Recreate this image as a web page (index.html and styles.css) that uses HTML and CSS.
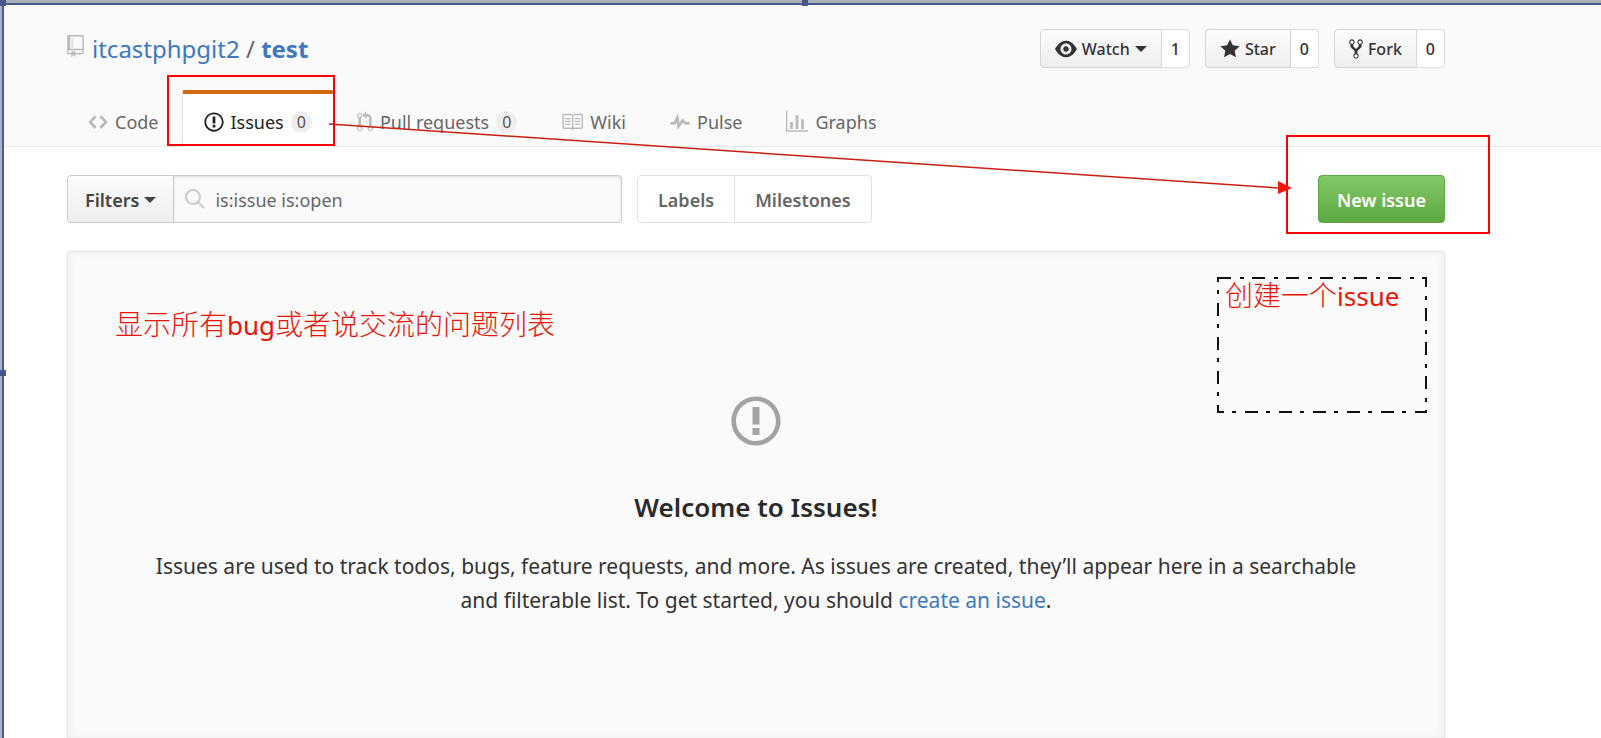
FILE: index.html
```html
<!DOCTYPE html>
<html lang="en">
<head>
<meta charset="utf-8">
<title>Issues · itcastphpgit2/test</title>
<link rel="stylesheet" href="styles.css">
</head>
<body>
<svg class="sprite" aria-hidden="true">
  <symbol id="issue" viewBox="0 0 14 16"><path d="M7 2.3c3.14 0 5.7 2.56 5.7 5.7s-2.56 5.7-5.7 5.7A5.71 5.71 0 0 1 1.3 8c0-3.14 2.56-5.7 5.7-5.7zM7 1C3.14 1 0 4.14 0 8s3.14 7 7 7 7-3.14 7-7-3.14-7-7-7zm1 3H6v5h2V4zm0 6H6v2h2v-2z"/></symbol>
</svg>
<header class="pagehead">
  <div class="container repo-row">
    <h1 class="repo-title">
      <svg class="repo-icon" viewBox="0 0 12 16" aria-hidden="true"><path d="M4 9H3V8h1v1zm0-3H3v1h1V6zm0-2H3v1h1V4zm0-2H3v1h1V2zm8-1v12c0 .55-.45 1-1 1H6v2l-1.500-1.500L3 16v-2H1c-.55 0-1-.45-1-1V1c0-.55.45-1 1-1h10c.55 0 1 .45 1 1zm-1 10H1v2h2v-1h3v1h5v-2zm0-10H2v9h9V1z"/></svg>
      <span><a href="#">itcastphpgit2</a> / <a class="repo-name" href="#">test</a></span>
    </h1>
    <div class="actions">
      <div class="social">
        <button class="social-btn" type="button"><svg class="icon-wide" viewBox="0 0 16 16" aria-hidden="true"><path d="M8.060 2C3 2 0 8 0 8s3 6 8.060 6C13 14 16 8 16 8s-3-6-7.940-6zM8 12c-2.200 0-4-1.780-4-4 0-2.200 1.800-4 4-4 2.220 0 4 1.800 4 4 0 2.220-1.780 4-4 4zm2-4c0 1.110-.89 2-2 2-1.110 0-2-.89-2-2 0-1.110.89-2 2-2 1.110 0 2 .89 2 2z"/></svg>Watch<span class="caret"></span></button>
        <a class="social-count" href="#">1</a>
      </div>
      <div class="social">
        <button class="social-btn" type="button"><svg class="icon-mid" viewBox="0 0 14 16" aria-hidden="true"><path d="M14 6l-4.900-.64L7 1 4.900 5.360 0 6l3.600 3.260L2.670 14 7 11.670 11.330 14l-.93-4.740z"/></svg>Star</button>
        <a class="social-count" href="#">0</a>
      </div>
      <div class="social">
        <button class="social-btn" type="button"><svg class="icon-thin" viewBox="0 0 10 16" aria-hidden="true"><path d="M8 1a1.993 1.993 0 0 0-1 3.720V6L5 8 3 6V4.720A1.993 1.993 0 0 0 2 1a1.993 1.993 0 0 0-1 3.720V6.500l3 3v1.780A1.993 1.993 0 0 0 5 15a1.993 1.993 0 0 0 1-3.720V9.500l3-3V4.720A1.993 1.993 0 0 0 8 1zM2 4.200C1.340 4.200.8 3.650.8 3c0-.65.55-1.200 1.200-1.200.65 0 1.200.55 1.200 1.200 0 .65-.55 1.200-1.200 1.200zm3 10c-.66 0-1.200-.55-1.200-1.200 0-.65.55-1.200 1.200-1.200.65 0 1.200.55 1.200 1.200 0 .65-.55 1.200-1.200 1.200zm3-10c-.66 0-1.200-.55-1.200-1.200 0-.65.55-1.200 1.200-1.200.65 0 1.200.55 1.200 1.200 0 .65-.55 1.200-1.200 1.200z"/></svg>Fork</button>
        <a class="social-count" href="#">0</a>
      </div>
    </div>
  </div>
  <nav class="container tabs">
    <a class="tab" href="#"><svg class="icon-mid" viewBox="0 0 14 16" aria-hidden="true"><path d="M9.500 3L8 4.500 11.500 8 8 11.500 9.500 13 14 8 9.500 3zm-5 0L0 8l4.500 5L6 11.500 2.500 8 6 4.500 4.500 3z"/></svg>Code</a>
    <a class="tab selected" href="#"><svg class="icon-mid" aria-hidden="true"><use href="#issue"/></svg>Issues<span class="counter">0</span></a>
    <a class="tab" href="#"><svg class="icon-slim" viewBox="0 0 12 16" aria-hidden="true"><path d="M11 11.280V5c-.03-.78-.34-1.470-.94-2.060C9.460 2.350 8.780 2.030 8 2H7V0L4 3l3 3V4h1c.27.02.48.11.69.31.21.2.3.42.31.69v6.280A1.993 1.993 0 0 0 10 15a1.993 1.993 0 0 0 1-3.720zm-1 2.920c-.66 0-1.200-.55-1.200-1.200 0-.65.55-1.200 1.200-1.200.65 0 1.200.55 1.200 1.200 0 .65-.55 1.200-1.200 1.200zM4 3c0-1.110-.89-2-2-2a1.993 1.993 0 0 0-1 3.720v6.560A1.993 1.993 0 0 0 2 15a1.993 1.993 0 0 0 1-3.720V4.720c.59-.34 1-.98 1-1.720zm-.8 10c0 .66-.55 1.200-1.200 1.200-.65 0-1.200-.55-1.200-1.200 0-.65.55-1.200 1.200-1.200.65 0 1.200.55 1.200 1.200zM2 4.200C1.340 4.200.8 3.650.8 3c0-.65.55-1.200 1.200-1.200.65 0 1.200.55 1.200 1.200 0 .65-.55 1.200-1.200 1.200z"/></svg>Pull requests<span class="counter">0</span></a>
    <a class="tab" href="#"><svg class="icon-wide" viewBox="0 0 16 16" aria-hidden="true"><path d="M3 5h4v1H3V5zm0 3h4V7H3v1zm0 2h4V9H3v1zm11-5h-4v1h4V5zm0 2h-4v1h4V7zm0 2h-4v1h4V9zm2-6v9c0 .55-.45 1-1 1H9.500l-1 1-1-1H2c-.55 0-1-.45-1-1V3c0-.55.45-1 1-1h5.500l1 1 1-1H15c.55 0 1 .45 1 1zm-8 .5L7.500 3H2v9h6V3.500zm7-.5H9.500l-.5.5V12h6V3z"/></svg>Wiki</a>
    <a class="tab" href="#"><svg class="icon-mid" viewBox="0 0 14 16" aria-hidden="true"><path d="M11.500 8L8.800 5.400 6.600 8.500 5.500 1.600 2.380 8H0v2h3.600l.9-1.800.9 5.400L9 8.500l1.600 1.500H14V8z"/></svg>Pulse</a>
    <a class="tab" href="#"><svg class="icon-wide" viewBox="0 0 16 16" aria-hidden="true"><path d="M16 14v1H0V0h1v14h15zM5 13H3V8h2v5zm4 0H7V3h2v10zm4 0h-2V6h2v7z"/></svg>Graphs</a>
  </nav>
</header>
<main class="container content">
  <div class="toolbar">
    <form class="search">
      <button class="filters" type="button">Filters<span class="caret"></span></button>
      <label class="search-field">
        <svg class="search-icon" viewBox="0 0 22 22" aria-hidden="true"><circle cx="9" cy="9" r="7"/><path d="M14 14l6 6"/></svg>
        <input class="search-input" type="text" value="is:issue is:open" aria-label="Search all issues">
      </label>
    </form>
    <div class="subnav"><a href="#">Labels</a><a href="#">Milestones</a></div>
    <button class="new-issue" type="button">New issue</button>
  </div>
  <section class="blankslate">
    <svg class="blank-icon" aria-hidden="true"><use href="#issue"/></svg>
    <h2>Welcome to Issues!</h2>
    <p>Issues are used to track todos, bugs, feature requests, and more. As issues are created, they’ll appear here in a searchable and filterable list. To get started, you should <a href="#">create an issue</a>.</p>
  </section>
</main>
<div class="annotations">
  <div class="mark mark-tab"></div>
  <div class="mark mark-button"></div>
  <svg class="arrow" viewBox="0 0 964 74" aria-hidden="true"><path class="arrow-line" d="M0 4L950 68"/><path class="arrow-head" d="M949 61L963 68L949 74z"/></svg>
  <div class="note note-list" lang="zh">显示所有<span>bug</span>或者说交流的问题列表</div>
  <svg class="dash-box" viewBox="0 0 210 136" aria-hidden="true"><rect x="1" y="1" width="208" height="134"/></svg>
  <div class="note note-create" lang="zh">创建一个<span>issue</span></div>
  <div class="frame"></div>
  <i class="handle handle-corner"></i><i class="handle handle-top"></i><i class="handle handle-left"></i>
</div>
</body>
</html>
```
FILE: styles.css
```css
* { box-sizing: border-box; }

body {
  margin: 0;
  height: 100vh;
  overflow: hidden;
  position: relative;
  display: flex;
  flex-direction: column;
  background: #fff;
  color: #333;
  font: 18px/28px "Noto Sans", "Open Sans", sans-serif;
}

a { color: #4078c0; text-decoration: none; }
button, input { font: inherit; color: inherit; }
svg { fill: currentColor; flex: none; }
.sprite { position: absolute; width: 0; height: 0; }
.container { padding: 0 156px 0 67px; }

.icon-wide { width: 22px; height: 22px; }
.icon-mid { width: 20px; height: 22px; }
.icon-slim { width: 16px; height: 22px; }
.icon-thin { width: 14px; height: 22px; }

.caret {
  border: 6px solid transparent;
  border-top-color: currentColor;
  border-bottom: 0;
}

.pagehead { background: #fafafa; border-bottom: 1px solid #e8e8e8; padding-top: 29px; }
.repo-row { display: flex; justify-content: space-between; height: 61px; }
.repo-title {
  display: flex;
  gap: 8px;
  margin: 0;
  font-size: 24px;
  line-height: 40px;
  font-weight: 400;
  color: #666;
}
.repo-icon { width: 17px; height: 22px; margin-top: 6px; color: #b8b8b8; }
.repo-name { font-weight: 700; }

.actions { display: flex; gap: 15px; font-size: 16px; font-weight: 500; }
.social { display: flex; height: 39px; }
.social-btn {
  display: flex;
  align-items: center;
  gap: 5px;
  padding: 0 14px;
  border: 1px solid #d5d5d5;
  border-radius: 4px 0 0 4px;
  background: linear-gradient(#fcfcfc, #eee);
}
.social-count {
  display: flex;
  align-items: center;
  padding: 0 9px;
  border: 1px solid #ddd;
  border-left: 0;
  border-radius: 0 4px 4px 0;
  background: #fff;
  color: #333;
}

.tabs { display: flex; gap: 2px; height: 56px; }
.tab {
  display: flex;
  align-items: center;
  gap: 7px;
  padding: 7px 21px 0;
  color: #666;
}
.tab svg { color: #bbb; }
.tab.selected {
  margin-bottom: -1px;
  padding-top: 3px;
  border: 1px solid #e5e5e5;
  border-top: 4px solid #d26911;
  border-bottom: 0;
  border-radius: 3px 3px 0 0;
  background: #fff;
  color: #222;
}
.tab.selected svg { color: #222; }
.counter {
  padding: 0 6px;
  border-radius: 11px;
  background: #eee;
  color: #555;
  font-size: 16px;
  line-height: 22px;
}

.content { flex: 1; display: flex; flex-direction: column; padding-top: 28px; }
.toolbar { display: flex; gap: 15px; height: 48px; margin-bottom: 28px; }
.search { display: flex; width: 555px; }
.filters {
  display: flex;
  align-items: center;
  gap: 5px;
  padding: 2px 17px 0;
  border: 1px solid #ccc;
  border-radius: 4px 0 0 4px;
  background: linear-gradient(#fcfcfc, #eee);
  font-weight: 600;
  color: #444;
}
.search-field {
  flex: 1;
  display: flex;
  align-items: center;
  gap: 9px;
  padding: 0 10px;
  border: 1px solid #ccc;
  border-left: 0;
  border-radius: 0 4px 4px 0;
  background: #fafafa;
  box-shadow: inset 0 1px 3px #ddd;
  color: #666;
}
.search-icon { width: 22px; height: 22px; fill: none; stroke: #ccc; stroke-width: 2; }
.search-input { flex: 1; min-width: 0; padding: 2px 0 0; border: 0; outline: 0; background: none; }
.subnav { display: flex; border: 1px solid #e2e2e2; border-radius: 4px; }
.subnav a {
  display: flex;
  align-items: center;
  padding: 2px 20px 0;
  color: #666;
  font-weight: 600;
}
.subnav a + a { border-left: 1px solid #e2e2e2; }
.new-issue {
  margin-left: auto;
  padding: 2px 18px 0;
  border: 1px solid #5ca941;
  border-radius: 4px;
  background: linear-gradient(#84c868, #5ba842);
  color: #fff;
  font-weight: 600;
}

.blankslate {
  flex: 1;
  padding: 141px 72px 0;
  border: 1px solid #e3e3e3;
  border-bottom: 0;
  border-radius: 4px 4px 0 0;
  background: #fafafa;
  box-shadow: inset 0 0 8px #eee;
  text-align: center;
}
.blank-icon { width: 50px; height: 56px; color: #a3a3a3; display: block; margin: 0 auto; }
.blankslate h2 { margin: 40px 0 24px; font-size: 26px; line-height: 36px; font-weight: 600; color: #2a2a2a; }
.blankslate p { margin: 0; font-size: 21px; line-height: 34px; }

/* Tutorial mark-up laid over the page */
.annotations { position: absolute; inset: 0; pointer-events: none; }
.annotations > * { position: absolute; }
.mark { border: 2px solid #f00; }
.mark-tab { left: 167px; top: 75px; width: 168px; height: 71px; }
.mark-button { left: 1286px; top: 135px; width: 204px; height: 99px; }
.arrow { left: 329px; top: 120px; width: 964px; height: 74px; }
.arrow-line { stroke: #c8200f; stroke-width: 1.5; }
.arrow-head { fill: #f21a0c; }
.dash-box { left: 1217px; top: 277px; width: 210px; height: 136px; }
.dash-box rect { fill: none; stroke: #111; stroke-width: 2; stroke-dasharray: 13 9 4 8; }
.note {
  color: #e81508;
  white-space: nowrap;
  font: 300 28px/36px "Noto Sans CJK SC", sans-serif;
}
.note span { font-family: "Noto Sans", sans-serif; font-size: 26px; font-weight: 400; }
.note-list { left: 115px; top: 305px; }
.note-create { left: 1225px; top: 276px; }
.frame { inset: 0; border-top: 3px solid #aaaeb8; border-left: 2px solid #a9b3cc; }
.frame::after {
  content: "";
  position: absolute;
  inset: 0;
  border-top: 2px solid #4a5c8c;
  border-left: 2px solid #4a5c8c;
}
.handle { width: 6px; height: 6px; background: #465788; }
.handle-corner { left: 0; top: 0; }
.handle-top { left: 802px; top: 0; }
.handle-left { left: 0; top: 370px; }
```
